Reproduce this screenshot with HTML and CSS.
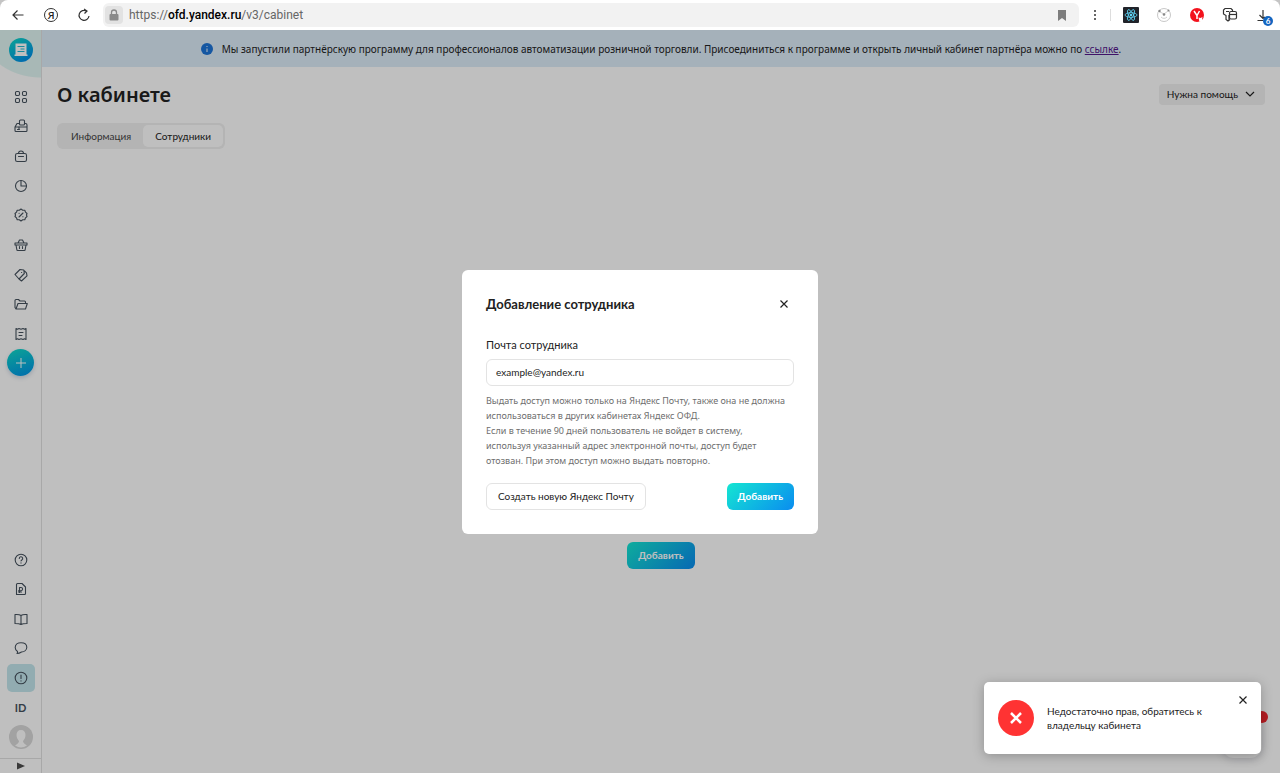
FILE: index.html
```
<!DOCTYPE html>
<html lang="ru">
<head>
  <meta charset="UTF-8">
  <title>О кабинете</title>
  <link rel="stylesheet" href="styles.css">
</head>
<body>

  <header class="browser-bar">
    <div class="browser-nav">
      <button type="button" aria-label="Назад">
        <svg width="14" height="14" viewBox="0 0 14 14"><path d="M12.5 7H2M6.500 2.500 2 7l4.500 4.500"/></svg>
      </button>
      <button type="button" class="ya" aria-label="Яндекс">Я</button>
      <button type="button" aria-label="Обновить">
        <svg width="14" height="14" viewBox="0 0 14 14"><path d="M12 8A5 5 0 1 1 9.500 3M7 1l3 2-2.500 2.500"/></svg>
      </button>
    </div>
    <div class="address">
      <span class="lock">
        <svg width="10" height="12" viewBox="0 0 10 12"><rect x="0.500" y="5" width="9" height="6.500" rx="1" fill="#8a8a8a"/><path d="M2.500 5V3.500a2.500 2.500 0 0 1 5 0V5" fill="none" stroke="#8a8a8a" stroke-width="1.300"/></svg>
      </span>
      <span class="url">https://<b>ofd.yandex.ru</b>/v3/cabinet</span>
      <svg class="bookmark" width="8" height="11" viewBox="0 0 8 11"><path d="M0 0h8v11L4 8l-4 3z" fill="#7d7d7d"/></svg>
    </div>
    <div class="browser-tools">
      <button type="button" aria-label="Меню">
        <svg width="14" height="14" viewBox="0 0 14 14"><g fill="#333" stroke="none"><circle cx="7" cy="3" r="1"/><circle cx="7" cy="7" r="1"/><circle cx="7" cy="11" r="1"/></g></svg>
      </button>
      <button type="button" class="split" aria-label="React">
        <svg width="16" height="16" viewBox="0 0 16 16"><rect width="16" height="16" rx="1" fill="#20232a" stroke="none"/><g stroke="#61dafb" stroke-width="0.800"><ellipse cx="8" cy="8" rx="6" ry="2.300"/><ellipse cx="8" cy="8" rx="6" ry="2.300" transform="rotate(60 8 8)"/><ellipse cx="8" cy="8" rx="6" ry="2.300" transform="rotate(120 8 8)"/></g><circle cx="8" cy="8" r="1.200" fill="#61dafb" stroke="none"/></svg>
      </button>
      <button type="button" aria-label="Расширение">
        <svg width="16" height="16" viewBox="0 0 16 16"><circle cx="8" cy="8" r="6.500" stroke="#c8c8c8" stroke-width="1"/><path d="M3 4.500 8 7l4-3M5 10a4 4 0 0 0 6 0" stroke="#d0d0d0" stroke-width="1"/><g fill="#888" stroke="none"><circle cx="8" cy="7.500" r="1.300"/><circle cx="3.500" cy="4" r="1.200"/><circle cx="12.500" cy="3.500" r="1"/></g></svg>
      </button>
      <button type="button" aria-label="Яндекс-расширение">
        <svg width="16" height="16" viewBox="0 0 16 16"><circle cx="8" cy="8" r="7" fill="#f3121d" stroke="none"/><path d="M5 4l3 4.500V12M10.500 4 8 8.500" stroke="#fff" stroke-width="1.500"/><path d="M9.500 10.500l2 .5 2-1-.5 2.500 1 1.500-2 0-1.500 1-.5-2z" fill="#fff" stroke="none"/></svg>
      </button>
      <button type="button" aria-label="Пароли">
        <svg width="16" height="16" viewBox="0 0 16 16"><path d="M8 12.500l-2 1.500-2-1.500V8.500L1.500 7V3l1.500-1.500h6L10.500 3v1M7 8v5M4 4.500h3"/><rect x="7.500" y="4.500" width="7" height="7.500" rx="1.500"/><path d="M7.500 7.500h7"/></svg>
      </button>
      <button type="button" class="downloads" aria-label="Загрузки">
        <svg width="14" height="14" viewBox="0 0 14 14"><path d="M7 2v8M3.500 7 7 10.500 9 9M1.500 12.500H7"/></svg>
        <span class="count">6</span>
      </button>
    </div>
  </header>

  <div class="app">
    <aside class="sidebar">
      <a class="logo" href="#" aria-label="Яндекс ОФД">
        <svg width="24" height="24" viewBox="0 0 24 24">
          <defs><linearGradient id="brand" x1="0" y1="0" x2="0.600" y2="1"><stop offset="0" stop-color="#10dcc8"/><stop offset="1" stop-color="#0090e8"/></linearGradient></defs>
          <circle cx="12" cy="12" r="12" fill="url(#brand)"/>
          <path d="M6.500 5.500h11v11h1V18h-13v-1.500h1z" fill="#fff"/>
          <path d="M8.500 8.500h7M11.500 11h4M8.500 13.500h7" stroke="#20b8d0"/>
        </svg>
      </a>
      <nav class="menu menu-top">
        <a href="#" aria-label="Главная"><svg viewBox="0 0 14 14"><rect x="1.500" y="1.500" width="4" height="4" rx="1.200"/><rect x="8.500" y="1.500" width="4" height="4" rx="1.200"/><rect x="1.500" y="8.500" width="4" height="4" rx="1.200"/><rect x="8.500" y="8.500" width="4" height="4" rx="1.200"/></svg></a>
        <a href="#" aria-label="Кассы"><svg viewBox="0 0 14 14"><path d="M5 4.500H3L1 8v3.500a1 1 0 0 0 1 1h10a1 1 0 0 0 1-1V6a1.500 1.500 0 0 0-1.500-1.500H11M1 8h12"/><rect x="5.500" y="1" width="5" height="5" rx="1"/><path d="M3.500 10.500h2M5 8v2.500"/></svg></a>
        <a href="#" aria-label="Магазины"><svg viewBox="0 0 14 14"><rect x="1.500" y="4.500" width="11" height="8" rx="1.800"/><path d="M4.500 4.500C4.500 2.500 5.500 2 7 2s2.500.500 2.500 2.500M4.500 7.500h5"/></svg></a>
        <a href="#" aria-label="Отчёты"><svg viewBox="0 0 14 14"><circle cx="7" cy="7" r="5.500"/><path d="M7 1.500V7h5.500"/></svg></a>
        <a href="#" aria-label="Скидки"><svg viewBox="0 0 14 14"><path d="M7 1l1.700 1.200 2.100 0 .7 2L13 5.500 12.500 7l.5 1.500-1.500 1.300-.7 2H8.700L7 13l-1.700-1.200H3.200l-.7-2L1 8.500 1.500 7 1 5.500l1.500-1.300.7-2h2.100zM5 9l4-4M5 5.300h.2M8.800 8.700H9"/></svg></a>
        <a href="#" aria-label="Товары"><svg viewBox="0 0 14 14"><path d="M1 5h12v2H1zM2 7l.8 4.500a1 1 0 0 0 1 1h6.400a1 1 0 0 0 1-1L12 7M4 5l1.500-3h3L10 5M5.500 8.500v2M8.500 8.500v2"/></svg></a>
        <a href="#" aria-label="Маркировка"><svg viewBox="0 0 14 14"><path d="M1 6.500 6 1.500 9.800 2l.5 3.500L5 11zM10.500 3l2 1.800.5 3L7.500 13 5 11"/><path d="M7.500 4.500h.2"/></svg></a>
        <a href="#" aria-label="Документы"><svg viewBox="0 0 14 14"><path d="M2 12 1 10.500V3.500a1 1 0 0 1 1-1h2.500L6 4h4.500a1 1 0 0 1 1 1v1.500M2 12l2-5.500h9.300L11.500 12z"/></svg></a>
        <a href="#" aria-label="Чеки"><svg viewBox="0 0 14 14"><path d="M2 1.500l1.500.8 1.500-.8 2 .8 2-.8 1.500.8 1.500-.8v11l-1.500-.8-1.500.8-2-.8-2 .8-1.500-.8-1.500.8zM5 5.500h4M5 8.500h3"/></svg></a>
      </nav>
      <button type="button" class="add" aria-label="Создать">
        <svg viewBox="0 0 14 14"><path d="M7 2v10M2 7h10"/></svg>
      </button>
      <nav class="menu menu-bottom">
        <a href="#" aria-label="Помощь"><svg viewBox="0 0 14 14"><circle cx="7" cy="7" r="5.800"/><path d="M5.300 5.500a1.700 1.700 0 1 1 2.500 1.500L7 7.800M7 9.800v.3"/></svg></a>
        <a href="#" aria-label="Тарифы"><svg viewBox="0 0 14 14"><path d="M2.500 12.500v-10a1 1 0 0 1 1-1H8l3.500 3.500v6.500a1 1 0 0 1-1 1zM5.500 10.500v-5h1.500a1.500 1.500 0 0 1 0 3.200H4.500M4.500 10h3"/></svg></a>
        <a href="#" aria-label="Инструкции"><svg viewBox="0 0 14 14"><path d="M7 3.500C5.500 2.300 3.500 2.300 1 2.500v9c2.500 0 4.500 0 6 1 1.500-1 3.500-1 6-1v-9c-2.500-.2-4.500-.2-6 1zM7 3.500v9"/></svg></a>
        <a href="#" aria-label="Чат"><svg viewBox="0 0 14 14"><path d="M3.500 10.500C2 9.500 1.200 8.300 1.200 6.500c0-3 2.500-4.800 5.800-4.800s5.800 1.800 5.800 4.600-2.500 4.700-5.300 4.700c-1.500 1-2.500 1.500-4.500 1.500.5-.7.700-1.300.5-2z"/></svg></a>
        <a href="#" class="current" aria-label="О кабинете"><svg viewBox="0 0 14 14"><circle cx="7" cy="7" r="5.800"/><path d="M7 4v3.500M7 9.700v.3"/></svg></a>
        <a href="#" class="id">ID</a>
        <a href="#" class="avatar" aria-label="Профиль"><svg viewBox="0 0 24 24"><circle cx="12" cy="12" r="12" fill="#d8d8d8"/><path d="M12 5c-3 0-4.500 2-4.500 5s1.500 5 2.500 6c0 2-2 3-4 4.500a11 11 0 0 0 12 0c-2-1.500-4-2.500-4-4.500 1-1 2.500-3 2.500-6s-1.500-5-4.500-5z" fill="#fff"/></svg></a>
      </nav>
      <button type="button" class="expand" aria-label="Развернуть">
        <svg width="8" height="8" viewBox="0 0 8 8"><path d="M0 .5v7L8 4z" fill="#4c4c4c"/></svg>
      </button>
    </aside>

    <main class="main">
      <div class="banner">
        <svg width="12" height="12" viewBox="0 0 12 12"><circle cx="6" cy="6" r="6" fill="#1d74d8"/><path d="M6 5.500v3.500M6 3v1" stroke="#cfe3f8" stroke-width="1.200"/></svg>
        <span>Мы запустили партнёрскую программу для профессионалов автоматизации розничной торговли. Присоединиться к программе и открыть личный кабинет партнёра можно по <a href="#">ссылке</a>.</span>
      </div>
      <div class="content">
        <div class="title-row">
          <h1>О кабинете</h1>
          <button type="button" class="help">Нужна помощь
            <svg width="10" height="6" viewBox="0 0 10 6"><path d="M1 1l4 4 4-4" fill="none" stroke="#222" stroke-width="1.200"/></svg>
          </button>
        </div>
        <div class="tabs">
          <button type="button">Информация</button>
          <button type="button" class="active">Сотрудники</button>
        </div>
        <div class="empty">
          <button type="button" class="btn btn-primary">Добавить</button>
        </div>
      </div>
      <div class="chat"><span class="chat-badge"></span></div>
    </main>

    <div class="overlay">
      <form class="modal">
        <div class="modal-head">
          <h2>Добавление сотрудника</h2>
          <button type="button" class="close" aria-label="Закрыть">
            <svg width="8" height="8" viewBox="0 0 8 8"><path d="M.5.5l7 7M7.500.5l-7 7"/></svg>
          </button>
        </div>
        <label for="email">Почта сотрудника</label>
        <input type="email" id="email" value="example@yandex.ru">
        <p class="hint">Выдать доступ можно только на Яндекс Почту, также она не должна<br>использоваться в других кабинетах Яндекс ОФД.<br>Если в течение 90 дней пользователь не войдет в систему,<br>используя указанный адрес электронной почты, доступ будет<br>отозван. При этом доступ можно выдать повторно.</p>
        <div class="modal-actions">
          <button type="button" class="btn btn-outline">Создать новую Яндекс Почту</button>
          <button type="button" class="btn btn-primary">Добавить</button>
        </div>
      </form>
    </div>

    <div class="toast" role="alert">
      <svg width="36" height="36" viewBox="0 0 36 36"><circle cx="18" cy="18" r="18" fill="#ff3333"/><path d="M13 13l10 10M23 13 13 23" stroke="#fff" stroke-width="2.500"/></svg>
      <p>Недостаточно прав, обратитесь к владельцу кабинета</p>
      <button type="button" class="close" aria-label="Закрыть">
        <svg width="8" height="8" viewBox="0 0 8 8"><path d="M.5.5l7 7M7.500.5l-7 7"/></svg>
      </button>
    </div>
  </div>

</body>
</html>
```
FILE: styles.css
```
* {
  box-sizing: border-box;
}

body {
  margin: 0;
  min-height: 100vh;
  display: flex;
  flex-direction: column;
  font-family: Lato, "Noto Sans", sans-serif;
  font-size: 10px;
  color: #222;
  background: #c4c4c4;
}

button {
  font: inherit;
  color: inherit;
  border: none;
  background: none;
  padding: 0;
  cursor: pointer;
}

svg {
  display: block;
  flex: none;
}

/* browser */
.browser-bar {
  display: flex;
  align-items: center;
  height: 30px;
  padding-left: 10px;
  background: #fff;
  border-radius: 8px 8px 0 0;
}

.browser-nav {
  display: flex;
  gap: 17px;
  margin-right: 11px;
}

.browser-nav button,
.browser-tools button {
  width: 16px;
  height: 16px;
  display: flex;
  align-items: center;
  justify-content: center;
}

.browser-nav svg,
.browser-tools svg {
  fill: none;
  stroke: #333;
  stroke-width: 1.2;
}

.browser-nav .ya {
  width: 14px;
  height: 14px;
  margin: 1px;
  border: 1px solid #333;
  border-radius: 50%;
  font-weight: 600;
}

.address {
  flex: 1;
  display: flex;
  align-items: center;
  height: 24px;
  padding: 0 13px 0 2px;
  background: #f2f2f2;
  border-radius: 6px;
}

.lock {
  display: flex;
  align-items: center;
  justify-content: center;
  width: 18px;
  height: 18px;
  margin-right: 6px;
  background: #e2e2e2;
  border-radius: 4px;
}

.url {
  flex: 1;
  font-family: Roboto, sans-serif;
  font-size: 12px;
  color: #666;
}

.url b {
  font-weight: 500;
  color: #000;
}

.browser-tools {
  display: flex;
  gap: 17px;
  padding: 0 9px 0 8px;
}

.browser-tools .split {
  position: relative;
  margin-left: 3px;
}

.browser-tools .split::before {
  content: "";
  position: absolute;
  left: -13px;
  width: 1px;
  height: 12px;
  background: #ddd;
}

.downloads {
  position: relative;
}

.count {
  position: absolute;
  right: -2px;
  bottom: -3px;
  width: 10px;
  height: 10px;
  border-radius: 50%;
  background: #1465c0;
  color: #fff;
  font-size: 8px;
  line-height: 10px;
  font-weight: 700;
}

/* layout */
.app {
  flex: 1;
  display: flex;
  position: relative;
  background: #fff;
}

.sidebar {
  width: 42px;
  display: flex;
  flex-direction: column;
  align-items: center;
  border-right: 1px solid #e0e0e0;
  background: radial-gradient(ellipse 60px 48px at 41px 0, #e0f6f3 98%, transparent 100%);
}

.logo {
  margin: 8px 0 20px;
}

.menu {
  display: grid;
  width: 28px;
  grid-auto-rows: 1fr;
}

.menu-top {
  height: 267px;
}

.menu-bottom {
  height: 207px;
  margin-top: auto;
  margin-bottom: 6px;
}

.menu a {
  display: flex;
  align-items: center;
  justify-content: center;
  border-radius: 5px;
  color: #46525e;
  text-decoration: none;
}

.menu svg {
  width: 14px;
  height: 14px;
  fill: none;
  stroke: #46525e;
  stroke-width: 1.1;
  stroke-linejoin: round;
  stroke-linecap: round;
}

.menu .current {
  height: 28px;
  align-self: center;
  background: #c3e6ec;
}

.menu .id {
  font-size: 11px;
  font-weight: 700;
}

.menu .avatar svg {
  width: 24px;
  height: 24px;
  stroke: none;
}

.add {
  width: 27px;
  height: 27px;
  border-radius: 50%;
  background: linear-gradient(160deg, #10dcc8, #0090e8);
  box-shadow: 0 2px 4px rgba(0, 60, 120, 0.2);
}

.add svg {
  width: 14px;
  margin: auto;
  stroke: #fff;
}

.expand {
  display: flex;
  align-items: center;
  justify-content: center;
  width: 100%;
  height: 15px;
  border-top: 1px solid #e0e0e0;
}

.main {
  flex: 1;
  display: flex;
  flex-direction: column;
}

.banner {
  display: flex;
  align-items: center;
  justify-content: center;
  gap: 9px;
  min-height: 37px;
  background: #ddecf9;
  font-family: "Noto Sans", sans-serif;
}

.banner a {
  color: #551a8b;
}

.content {
  flex: 1;
  display: flex;
  flex-direction: column;
  padding: 13px 15px 0;
}

.title-row {
  display: flex;
  align-items: center;
  justify-content: space-between;
  height: 28px;
}

h1 {
  margin: 0;
  font-family: "Noto Sans", sans-serif;
  font-size: 20px;
  font-weight: 600;
}

.help {
  display: flex;
  align-items: center;
  gap: 7px;
  height: 21px;
  padding: 0 10px 0 8px;
  background: #f0f0f0;
  border-radius: 4px;
}

.tabs {
  display: flex;
  align-self: flex-start;
  margin-top: 15px;
  padding: 2px;
  background: #f0f0f0;
  border-radius: 6px;
}

.tabs button {
  height: 22px;
  padding: 0 12px;
  border-radius: 5px;
  color: #444;
}

.tabs .active {
  background: #fff;
  color: #222;
}

.empty {
  flex: 1;
  display: flex;
  align-items: center;
  justify-content: center;
  padding-top: 188px;
}

.btn {
  height: 27px;
  padding: 0 11px;
  border-radius: 6px;
}

.btn-primary {
  background: linear-gradient(135deg, #14e6d2, #0a8cf0);
  color: #fff;
  font-weight: 700;
}

.btn-outline {
  border: 1px solid #e3e3e3;
  background: #fff;
}

.chat {
  position: absolute;
  right: 18px;
  bottom: 15px;
  width: 40px;
  height: 44px;
  border-radius: 12px;
  background: #fff;
  box-shadow: 0 2px 8px rgba(0, 0, 40, 0.15);
}

.chat-badge {
  position: absolute;
  top: -3px;
  right: -6px;
  width: 12px;
  height: 12px;
  border-radius: 50%;
  background: #f0262e;
}

/* modal */
.overlay {
  position: absolute;
  inset: 0;
  display: flex;
  align-items: center;
  justify-content: center;
  background: rgba(0, 0, 0, 0.25);
}

.modal {
  display: flex;
  flex-direction: column;
  width: 356px;
  padding: 24px;
  background: #fff;
  border-radius: 6px;
}

.modal-head {
  display: flex;
  align-items: center;
  justify-content: space-between;
  height: 20px;
  margin-bottom: 22px;
}

h2 {
  margin: 0;
  font-size: 13px;
  font-weight: 700;
}

.close {
  width: 20px;
  height: 20px;
}

.close svg {
  margin: auto;
  stroke: #222;
  stroke-width: 1.2;
}

.modal label {
  margin-bottom: 5px;
  font-size: 11px;
  line-height: 18px;
}

.modal input {
  height: 27px;
  padding: 0 9px;
  border: 1px solid #e3e3e3;
  border-radius: 6px;
  font: inherit;
  color: #222;
}

.hint {
  margin: 7px 0 15px;
  font-family: "Noto Sans", sans-serif;
  font-size: 9px;
  line-height: 15px;
  color: #6e6e6e;
}

.modal-actions {
  display: flex;
  justify-content: space-between;
}

/* toast */
.toast {
  position: absolute;
  right: 19px;
  bottom: 19px;
  display: flex;
  align-items: center;
  gap: 13px;
  width: 277px;
  height: 72px;
  padding: 0 8px 0 14px;
  background: #fff;
  border-radius: 5px;
  box-shadow: 0 2px 12px rgba(0, 0, 0, 0.25);
}

.toast p {
  flex: 1;
  margin: 0;
  padding-right: 16px;
  line-height: 14px;
}

.toast .close {
  align-self: flex-start;
  margin-top: 8px;
}
```
